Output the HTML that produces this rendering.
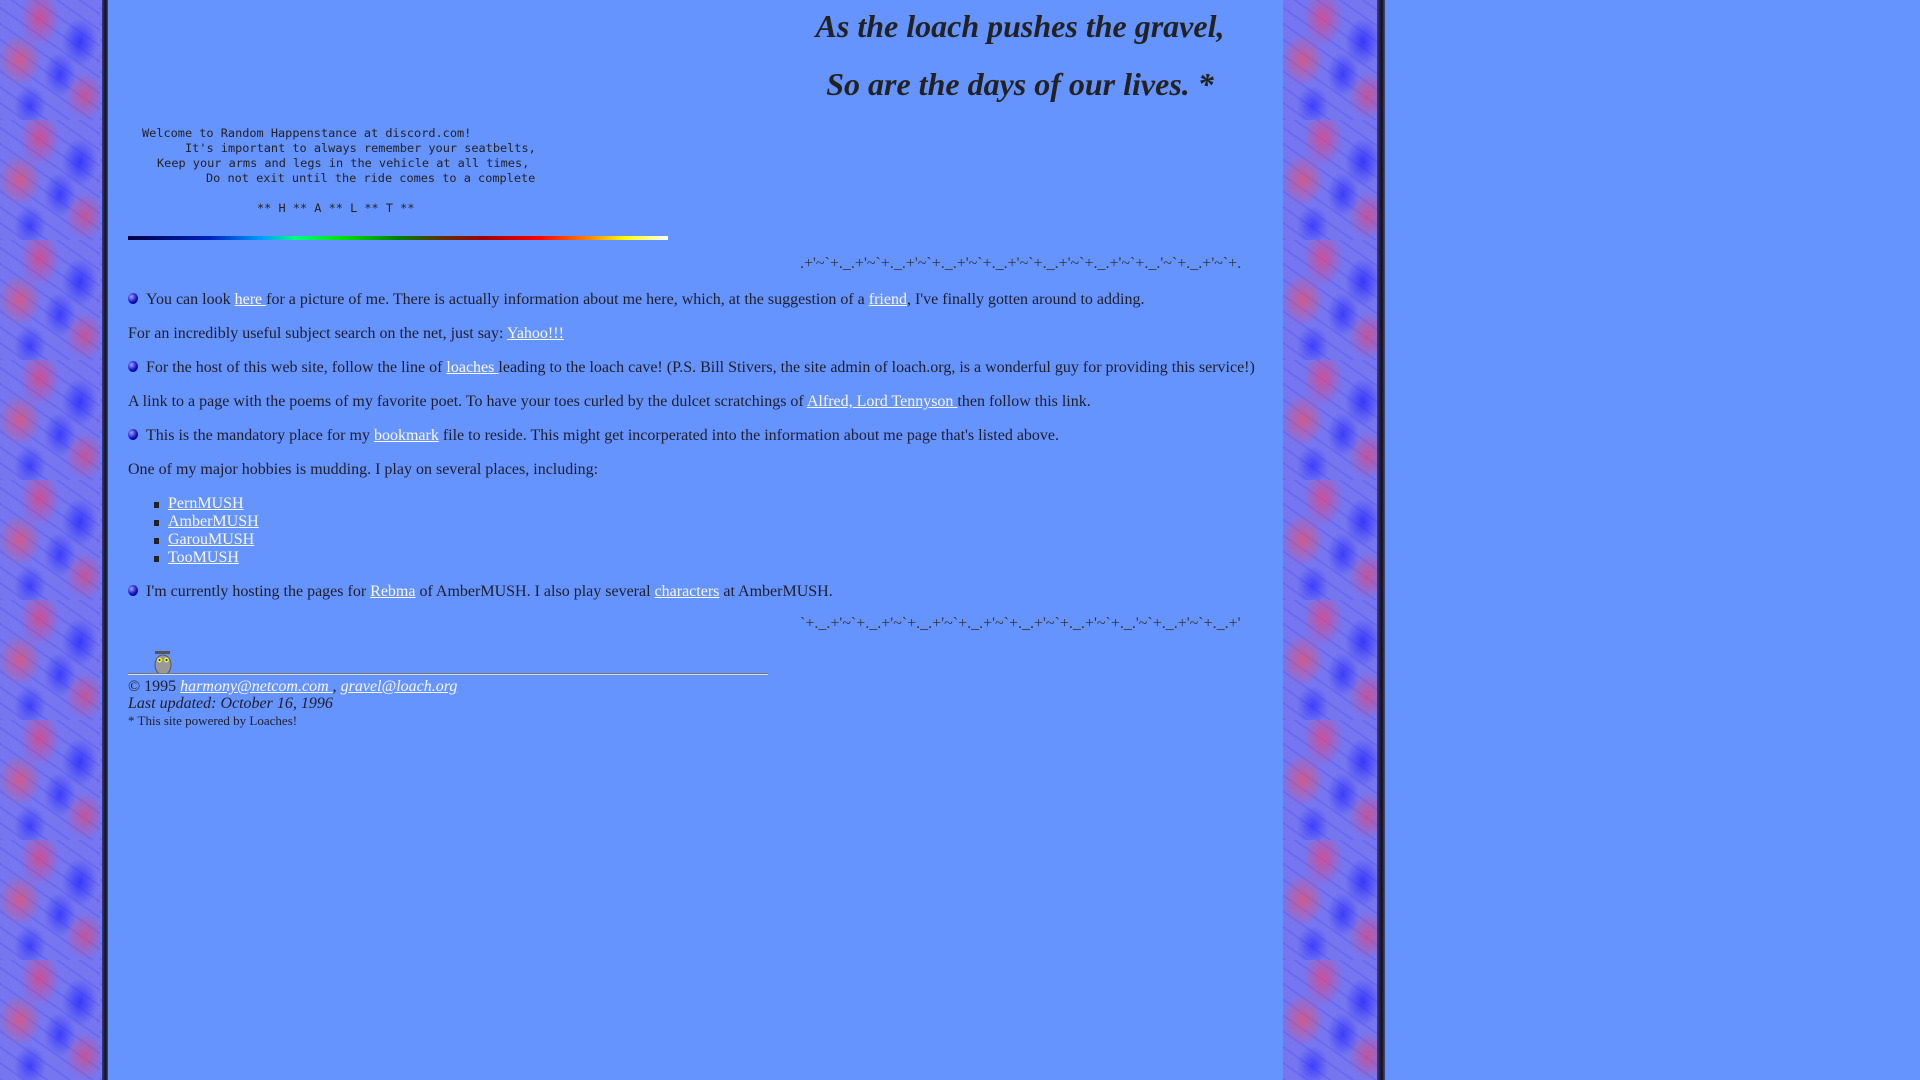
<!DOCTYPE html>
<html><head><meta charset="utf-8"><style>
html,body{margin:0;padding:0;width:1920px;height:1080px;overflow:hidden;background:#6694ff;}
body{position:relative;font-family:"Liberation Serif",serif;color:#1e1e2a;font-size:16px;}
.stripe{position:absolute;top:0;height:1080px;
background:
radial-gradient(ellipse 20px 28px at 40% 15%,rgba(225,70,130,.8),transparent),
radial-gradient(ellipse 18px 24px at 80% 35%,rgba(40,40,255,.8),transparent),
radial-gradient(ellipse 22px 26px at 20% 50%,rgba(235,80,110,.75),transparent),
radial-gradient(ellipse 16px 22px at 60% 62%,rgba(50,50,255,.85),transparent),
radial-gradient(ellipse 20px 24px at 85% 80%,rgba(225,70,120,.7),transparent),
radial-gradient(ellipse 16px 20px at 30% 88%,rgba(50,50,255,.8),transparent),
repeating-linear-gradient(35deg,rgba(40,40,240,.15) 0 2px,transparent 2px 13px),
#7676f0;background-size:100px 120px;}
.shadow{position:absolute;top:0;height:1080px;background:linear-gradient(90deg,#3a3a88,#111 60%,#444a80);}
.t{position:absolute;white-space:nowrap;}
a{color:#f8f8ff;text-decoration:underline;}
.b{display:inline-block;width:10px;height:11px;border-radius:50%;background:radial-gradient(circle at 35% 35%,#a0a0ff,#1010c0 55%,#000060);margin-right:8px;vertical-align:0px;}
.mono{font-family:"DejaVu Sans Mono","Liberation Mono",monospace;font-size:11.9px;color:#222;}
h1{position:absolute;margin:0;font-size:32px;font-weight:bold;font-style:italic;white-space:nowrap;width:600px;text-align:center;left:720px;color:#222;}
.wave{font-size:16px;color:#333;}
ul{margin:0;padding:0;list-style:none;}
li{position:relative;height:18px;}
li:before{content:"";position:absolute;left:-14px;top:7px;width:5px;height:6px;background:#222;}
</style></head><body>
<div class="stripe" style="left:0;width:102px"></div>
<div class="shadow" style="left:102px;width:6px"></div>
<div class="stripe" style="left:1283px;width:94px"></div>
<div class="shadow" style="left:1377px;width:8px"></div>

<h1 style="top:8px">As the loach pushes the gravel,</h1>
<h1 style="top:66px">So are the days of our lives. *</h1>

<div class="t mono" style="left:142px;top:126px">Welcome to Random Happenstance at discord.com!</div>
<div class="t mono" style="left:185px;top:141px">It's important to always remember your seatbelts,</div>
<div class="t mono" style="left:157px;top:156px">Keep your arms and legs in the vehicle at all times,</div>
<div class="t mono" style="left:206px;top:171px">Do not exit until the ride comes to a complete</div>
<div class="t mono" style="left:257px;top:201px">** H ** A ** L ** T **</div>

<div class="t" style="left:128px;top:236px;width:540px;height:4px;background:linear-gradient(90deg,#000040,#0020c0 15%,#00a0ff 25%,#00ff80 31%,#00e000 40%,#008000 50%,#603000 58%,#a00000 66%,#ff0000 76%,#ff8000 85%,#ffff00 92%,#ffffff)"></div>

<div class="t wave" style="left:800px;top:255px">.+'~`+._.+'~`+._.+'~`+._.+'~`+._.+'~`+._.+'~`+._.+'~`+._.'~`+._.+'~`+.</div>

<div class="t" style="left:128px;top:291px"><span class="b"></span>You can look <a>here </a>for a picture of me. There is actually information about me here, which, at the suggestion of a <a>friend</a>, I've finally gotten around to adding.</div>
<div class="t" style="left:128px;top:325px">For an incredibly useful subject search on the net, just say: <a>Yahoo!!!</a></div>
<div class="t" style="left:128px;top:359px"><span class="b"></span>For the host of this web site, follow the line of <a>loaches </a>leading to the loach cave! (P.S. Bill Stivers, the site admin of loach.org, is a wonderful guy for providing this service!)</div>
<div class="t" style="left:128px;top:393px">A link to a page with the poems of my favorite poet. To have your toes curled by the dulcet scratchings of <a>Alfred, Lord Tennyson </a>then follow this link.</div>
<div class="t" style="left:128px;top:427px"><span class="b"></span>This is the mandatory place for my <a>bookmark</a> file to reside. This might get incorperated into the information about me page that's listed above.</div>
<div class="t" style="left:128px;top:461px">One of my major hobbies is mudding. I play on several places, including:</div>
<ul class="t" style="left:168px;top:495px">
<li><a>PernMUSH</a></li><li><a>AmberMUSH</a></li><li><a>GarouMUSH</a></li><li><a>TooMUSH</a></li>
</ul>
<div class="t" style="left:128px;top:583px"><span class="b"></span>I'm currently hosting the pages for <a>Rebma</a> of AmberMUSH. I also play several <a>characters</a> at AmberMUSH.</div>

<div class="t wave" style="left:800px;top:615px">`+._.+'~`+._.+'~`+._.+'~`+._.+'~`+._.+'~`+._.+'~`+._.'~`+._.+'~`+._.+'</div>

<svg class="t" style="left:152px;top:650px" width="22" height="25" viewBox="0 0 22 25">
<rect x="3" y="1" width="15" height="3" fill="#555"/>
<ellipse cx="11" cy="15" rx="8" ry="10" fill="#999" stroke="#555"/>
<circle cx="7.5" cy="10" r="2.5" fill="#ee4"/><circle cx="14.5" cy="10" r="2.5" fill="#ee4"/>
<circle cx="7.5" cy="10" r="1" fill="#222"/><circle cx="14.5" cy="10" r="1" fill="#222"/>
</svg>
<div class="t" style="left:128px;top:673px;width:640px;height:1px;background:#777;border-bottom:1px solid #ddd"></div>
<div class="t" style="left:128px;top:678px">© 1995 <i><a>harmony@netcom.com </a></i>, <i><a>gravel@loach.org</a></i></div>
<div class="t" style="left:128px;top:695px;font-style:italic">Last updated: October 16, 1996</div>
<div class="t" style="left:128px;top:713px;font-size:13px">* This site powered by Loaches!</div>
</body></html>
